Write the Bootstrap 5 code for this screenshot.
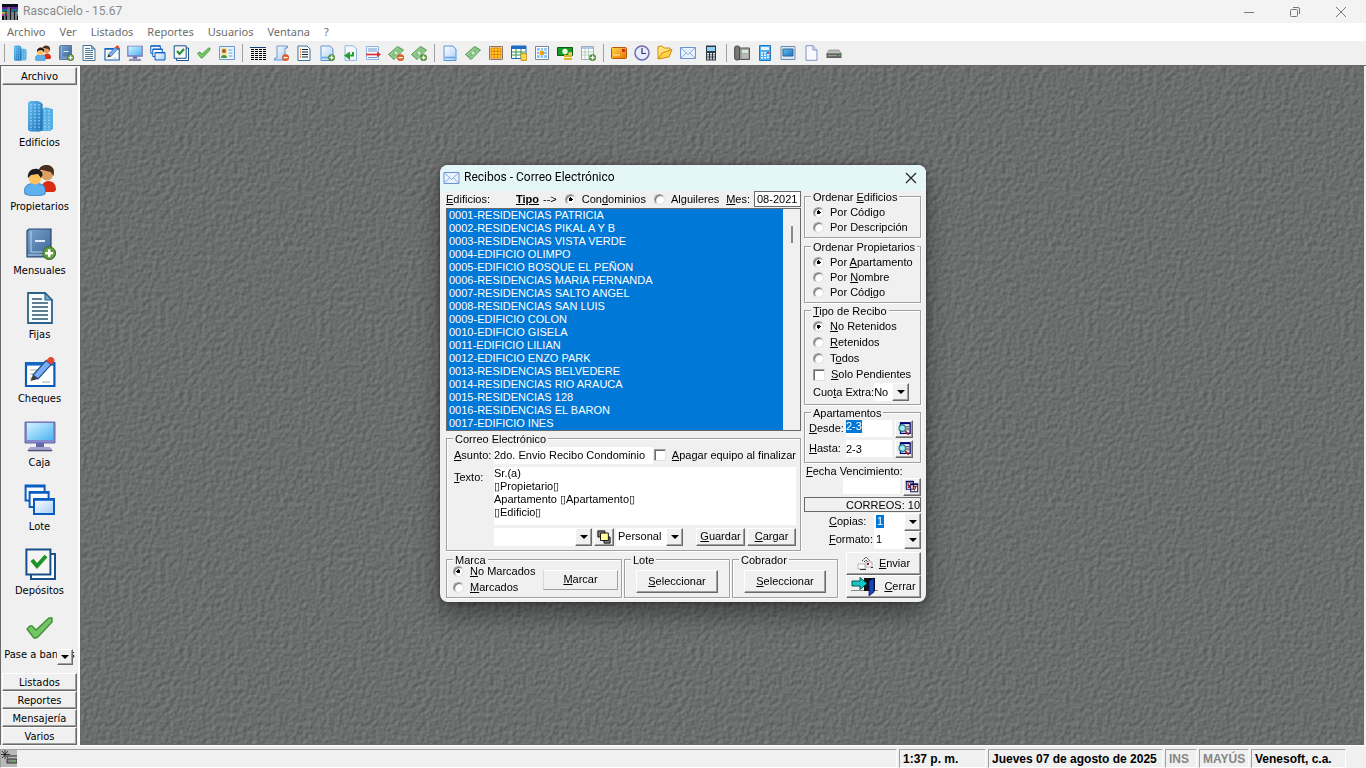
<!DOCTYPE html>
<html lang="es">
<head>
<meta charset="utf-8">
<meta name="viewport" content="width=device-width, initial-scale=1">
<title>RascaCielo - 15.67</title>
<link href="https://cdn.jsdelivr.net/npm/bootstrap@5.3.0/dist/css/bootstrap.min.css" rel="stylesheet">
<style>
:root{--face:#f0f0f0;--edge:#a0a0a0;--dark:#696969;--sel:#0078d7}
body{font-family:"Liberation Sans",Arial,sans-serif;font-size:11px;line-height:13px;color:#000;background:var(--face)}
u{text-underline-offset:1px}
.app-title{height:23px;background:#f3f3f3;color:#8a8a8a;font:12px/23px Roboto,sans-serif;padding:0 2px;gap:5px}
.win-btn{width:46px;height:20px;border:0;padding:0;background:none}
.win-btn svg{display:block;margin:auto}
.app-menu{height:18px;background:#fff;font:11px/18px "Noto Sans",sans-serif}
.app-menu a{color:#6d6d6d;padding:0 7px;text-decoration:none}
.toolbar{height:25px;border-bottom:1px solid var(--dark)}
.tool{width:23px;height:22px;padding:0;border:0;background:none}
.tool svg{width:16px;height:16px;display:block;margin:auto}
.tsep{width:8px;height:18px;background:linear-gradient(var(--edge),var(--edge)) center/1px 100% no-repeat}
.side{width:80px;border-left:1px solid var(--dark);border-right:2px solid #fff;font:11px/14px "DejaVu Sans Condensed","DejaVu Sans",sans-serif;padding:1px 1px 0 1px}
.side-tab{height:18px;border:1px solid;border-color:#fff var(--dark) var(--dark) #fff;background:var(--face);padding:0;line-height:15px;box-shadow:inset -1px -1px 0 var(--edge);color:#000}
.side-list{padding-top:7px;min-height:0}
.side-item{height:64px;border:0;background:none;padding:8px 0 0;white-space:nowrap;color:#000}
.side-item svg{width:32px;height:32px}
.side-item span{margin-top:4px}
.more{right:4px;bottom:8px;width:16px;height:16px}
.desk{background-color:#6b6e6c;border:1px solid var(--dark);border-top:0;margin-right:2px;background-image:url("data:image/svg+xml,%3Csvg xmlns='http://www.w3.org/2000/svg' width='256' height='256'%3E%3Cfilter id='f' x='0' y='0' width='100%25' height='100%25' color-interpolation-filters='sRGB'%3E%3CfeTurbulence type='fractalNoise' baseFrequency='.22' numOctaves='2' seed='4' stitchTiles='stitch'/%3E%3CfeDiffuseLighting surfaceScale='.5' lighting-color='%23959997'%3E%3CfeDistantLight azimuth='225' elevation='46'/%3E%3C/feDiffuseLighting%3E%3C/filter%3E%3Crect width='256' height='256' filter='url(%23f)'/%3E%3C/svg%3E")}
.status{height:23px;padding:3px 20px 0 0;gap:2px;font-size:12px;font-weight:700;border-top:1px solid #fff}
.pane{height:19px;border:1px solid;border-color:var(--edge) #fff #fff var(--edge);padding:0 3px;line-height:18px;white-space:nowrap}
.pane.off{color:#858585}
.tray{width:16px;height:17px}

.layer{pointer-events:none;padding-bottom:2px}
.dlg{width:486px;border-radius:8px;background:var(--face);pointer-events:auto;box-shadow:0 12px 24px rgba(0,0,0,.4),0 0 4px rgba(0,0,0,.45)}
.dlg-title{height:26px;background:#e5f6f8;font:12px/25px Roboto,sans-serif;border-radius:8px 8px 0 0;padding:0 3px}
.dlg-body{padding:0 5px 4px 6px}
.main-col{width:355px}
.side-col{width:117px}
fieldset.box{border:1px solid var(--edge);box-shadow:1px 1px 0 #fff,inset 1px 1px 0 #fff}
fieldset.box>legend{float:none;width:auto;margin:0 0 0 6px;padding:0 2px;font-size:11px;line-height:12px;background:var(--face)}
.stack{padding:2px 0 2px 8px}
.opt{height:15px;gap:6px;white-space:nowrap}
.opt.tall{height:16px}
.opt input{appearance:none;flex:none;margin:0;width:12px;height:12px;background:#fff;border:1px solid;border-color:var(--edge) #e3e3e3 #e3e3e3 var(--edge);box-shadow:inset 1px 1px 0 var(--dark)}
.opt input[type=radio]{border-radius:50%;width:11px;height:11px;box-shadow:inset 1px 1px 1px var(--dark)}
.opt input[type=radio]:checked{background:radial-gradient(circle,#000 0 2px,#fff 2px)}
.field{border:0;background:#fff;padding:0 2px;color:#000;min-width:0;font:inherit;border-radius:0;resize:none;outline:0}
.b3d{border:1px solid;border-color:#fff var(--dark) var(--dark) #fff;box-shadow:inset -1px -1px 0 var(--edge);background:var(--face);padding:0;color:#000;display:flex;align-items:center;justify-content:center}
.flat{border:1px solid var(--edge);border-top-color:#fff;border-left-color:#d8d8d8;background:var(--face);padding:0;color:#000}
.combo{background:#fff;height:18px}
.combo select{appearance:none;border:0;background:none;padding:0 2px;width:100%;height:100%;font:inherit;color:#000;outline:0;border-radius:0}
.combo select.picked{width:8px;height:13px;margin:2px;padding:0 1px;background:var(--sel);color:#fff;display:block}
.combo i{right:0;top:0;width:17px;height:100%;pointer-events:none}
.arr::after{content:"";border:4px solid transparent;border-top-color:#000;border-bottom:0}
.buildings{height:223px;border:1px solid var(--dark)}
.buildings select{border:0;padding:0;margin:0;background:#fff;outline:0;overflow:hidden;font:inherit;scrollbar-width:none;border-radius:0}
.buildings option{height:13px;min-height:13px;padding:0 2px;line-height:13px;background:var(--sel) linear-gradient(var(--sel),var(--sel));color:#fff;-webkit-text-fill-color:#fff}
.rail{width:17px;padding:17px 8px}
.rail div{width:2px;height:17px;background:#8a8a8a}
.hi{background:var(--sel);color:#fff;padding:0;display:block}
.lbl{width:37px}
.w-mes{width:47px;height:16px;border:1px solid var(--dark)}
.counter{height:15px;margin-top:1px;margin-bottom:1px;border:1px solid var(--dark);line-height:14px}
.sq{width:18px;height:18px}
.cmd{width:75px;height:23px;gap:6px}
.cmd svg{height:20px}
</style>
</head>
<body class="vh-100 overflow-hidden d-flex flex-column">
<svg class="position-absolute" width="0" height="0" aria-hidden="true">
<defs>
<linearGradient id="gb" x2="1" y2="1"><stop stop-color="#68bdf0"/><stop offset="1" stop-color="#1972ba"/></linearGradient>
<linearGradient id="gk" x2="1" y2="1"><stop stop-color="#7ba4cf"/><stop offset="1" stop-color="#3c6396"/></linearGradient>
<linearGradient id="gp" x2="1" y2="1"><stop stop-color="#fff"/><stop offset="1" stop-color="#a9cdf5"/></linearGradient>
<linearGradient id="gm" x2="1" y2="1"><stop stop-color="#d4f4ff"/><stop offset="1" stop-color="#4cb4f2"/></linearGradient>
<linearGradient id="gy" x2="1" y2="1"><stop stop-color="#ffd84a"/><stop offset="1" stop-color="#e67300"/></linearGradient>
</defs>
<symbol id="plus" viewBox="0 0 16 16"><circle cx="12.6" cy="12.6" r="3.2" fill="#5c9a3c" stroke="#38701f" stroke-width=".5"/><path d="M12.6 10.6v4M10.6 12.6h4" stroke="#fff" stroke-width="1.3"/></symbol>
<symbol id="minus" viewBox="0 0 16 16"><circle cx="12.6" cy="12.6" r="3.2" fill="#e6602a" stroke="#b53d0c" stroke-width=".5"/><path d="M10.6 12.6h4" stroke="#fff" stroke-width="1.3"/></symbol>
<symbol id="edif" viewBox="0 0 16 16"><path d="M2 1.500 3 .5h4l2 1V15l-1 .7H3L2 15z" fill="url(#gb)"/><path d="M9 4.500 11 3.600l3.500 1V14.500l-1.500 1H9z" fill="#56b0e6"/><path d="M3.500 2v13M5.500 2v13M7.500 2v13M10.500 5v10M12.500 5v10" stroke="#b5e4ff" stroke-width=".6" stroke-dasharray=".7 .9"/><path d="M9 2v13.500" stroke="#2473b0" stroke-width=".6"/></symbol>
<symbol id="prop" viewBox="0 0 16 16"><path d="M9 14c-.5-3 0-5 3-5.500 3 .1 4 2 4 4.500l-1 1z" fill="#dc2a13"/><circle cx="11.500" cy="5" r="3.200" fill="#dda063"/><path d="M7.500 3C8-.2 14.500-.6 15 3.500L14.800 6l-1.500-2-4-1z" fill="#4a2f20"/><path d="M.5 15c-.8-3 .5-5.200 4-5.200h2.500c3 .2 4.300 2 3.500 5.200-2 1.200-7.500 1.200-10 0z" fill="#5db1ef" stroke="#2674b8" stroke-width=".4"/><circle cx="5.500" cy="7.200" r="3.100" fill="#ffc25f"/><path d="M2 7C1.200 1.500 9 .8 9.300 5.500L8.500 7 7 5 3.500 5.500z" fill="#1b1b22"/></symbol>
<symbol id="mens" viewBox="0 0 16 16"><path d="M1.500 1.500 2.500.5h11v14h-12z" fill="url(#gk)" stroke="#28476f" stroke-width=".6"/><path d="M3.500 1.500v10.500h10M2 13.500h10" fill="none" stroke="#b8d3ec" stroke-width=".5"/><path d="M5.500 6.500h5" stroke="#dcecff" stroke-width="1"/><use href="#plus"/></symbol>
<symbol id="fija" viewBox="0 0 16 16"><path d="M2 .5h8.500l3.500 3.500v11.500H2z" fill="#f8fcff" stroke="#2c638d" stroke-width=".9"/><path d="M10.500.5V4H14z" fill="#78adc9" stroke="#2c638d" stroke-width=".6"/><path d="M4 3.500h5M4 5.500h8M4 7.500h8M4 9.500h8M4 11.500h8M4 13.500h8" stroke="#2f536d" stroke-width=".8"/></symbol>
<symbol id="cheq" viewBox="0 0 16 16"><path d="M1 3.500h14.200V15H1z" fill="#fff" stroke="#0b5bb8" stroke-width="1.100"/><path d="M1 3h14v1.800H1z" fill="#1467c5"/><path d="M3 7h5M3 9h4M3 11h3M9 13h4" stroke="#aaa" stroke-width=".6"/><path d="M4.500 9.500 11 2.300l2.500 2L7 11.500z" fill="#78aef4" stroke="#244f8c" stroke-width=".6"/><path d="m4.500 9.500 2.500 2L3.200 12.500z" fill="#3d3a35"/><path d="m11 2.300 1.700-1.700c1.600-.4 3 .9 2.400 2.300L13.500 4.300z" fill="#e3482d"/></symbol>
<symbol id="caja" viewBox="0 0 16 16"><path d="M.5 1h15v10.500H.5z" fill="#8589c9" stroke="#6669ac" stroke-width=".5"/><path d="M1.500 1.500h13V10h-13z" fill="url(#gm)"/><path d="M6 11.500h4V14H6z" fill="#6367a0"/><path d="M3 13.500h10l1.500 2h-13z" fill="#a6a5d1"/><path d="M2 15.300h12" stroke="#504f78" stroke-width=".7"/></symbol>
<symbol id="lote" viewBox="0 0 16 16"><g fill="#f7fbff" stroke="#0a5cc0" stroke-width="1"><path d="M.8.8h9.500v7.500H.8z"/><path d="M2.800 4h9.500v7.500H2.800z"/><path d="M5 7.500h10V15H5z" fill="url(#gp)"/></g><path d="M.8 1.200h9.500M2.800 4.400h9.500M5 7.900h10" stroke="#0a5cc0" stroke-width="1"/></symbol>
<symbol id="depo" viewBox="0 0 16 16"><path d="M3.500 3h12v12.500h-12z" fill="#fff" stroke="#17508a"/><path d="M1.200.8h12v12.500h-12z" fill="#f5f5f5" stroke="#17508a"/><path d="m4 6 2.500 3L11 4" fill="none" stroke="#1e9327" stroke-width="2"/></symbol>
<symbol id="chk" viewBox="0 0 16 16"><path d="m1.500 8.500 1.500-1.500h1L6 9l6.500-6h1.500v2L7 12.500l-1 .5H5z" fill="#74c566" stroke="#438f3c" stroke-width=".7"/></symbol>
<symbol id="card" viewBox="0 0 16 16"><path d="M.5 1.500h15v13H.5z" fill="#eaf4ff" stroke="#6798cb"/><path d="M2 3h6v10H2z" fill="#f4dfa5"/><circle cx="5" cy="6" r="2" fill="#a35c15"/><path d="M2 13c.3-4 5.700-4 6 0z" fill="#419440"/><path d="M9.500 5h4M9.500 8h4M9.500 11h4" stroke="#6f9dcc"/></symbol>
<symbol id="grid" viewBox="0 0 16 16"><path d="M0 2.500h16" stroke="#1a3a7a"/><path d="M1 4.500h3M5 4.500h3M9 4.500h3M13 4.500h3M1 6.500h3M5 6.500h3M9 6.500h3M13 6.500h3M1 8.500h3M5 8.500h3M9 8.500h3M13 8.500h3M1 10.500h3M5 10.500h3M9 10.500h3M13 10.500h3M1 12.500h3M5 12.500h3M9 12.500h3M13 12.500h3M1 14.500h3M5 14.500h3M9 14.500h3M13 14.500h3" stroke="#000"/></symbol>
<symbol id="scroll" viewBox="0 0 16 16"><path d="M4 1h10.500v2H12v10l-1.500 2H1l1-2h2z" fill="url(#gp)" stroke="#5a8dc9" stroke-width=".9"/><use href="#minus"/></symbol>
<symbol id="list" viewBox="0 0 16 16"><path d="M2 1h9l3 3v11.500H2z" fill="#f8fcff" stroke="#2c638d" stroke-width=".9"/><path d="M4 4.500h1M4 7h1M4 9.500h1M4 12h1" stroke="#e36e15" stroke-width="1.300"/><path d="M6 4.500h6M6 7h6M6 9.500h6M6 12h6" stroke="#123" stroke-width="1"/></symbol>
<symbol id="page" viewBox="0 0 16 16"><path d="M2 1h9l3 3v11.500H2z" fill="url(#gp)" stroke="#4d8bd4" stroke-width=".9"/><path d="M3 12.500h10" stroke="#67a4e5" stroke-width="1.600"/></symbol>
<symbol id="padd" viewBox="0 0 16 16"><use href="#page"/><use href="#plus"/></symbol>
<symbol id="parr" viewBox="0 0 16 16"><path d="M3 .8h8l3.500 3v11.500H3z" fill="#f3f9ff" stroke="#7aa3d4" stroke-width=".8"/><path d="M12 7v4.500H8V15l-6-4.500 6-4v3h2V7z" fill="#27a12d"/></symbol>
<symbol id="move" viewBox="0 0 16 16"><path d="M1.500 1.500h12v13h-12z" fill="#f4f8ff" stroke="#8fb4df"/><path d="M3 4h9M3 6h9M3 12.500h9" stroke="#6c98cf"/><path d="M1 9.500h12" stroke="#e22e36" stroke-width="1.700"/><path d="m12 6.500 4 3-4 3z" fill="#e22e36"/></symbol>
<symbol id="cash" viewBox="0 0 16 16"><path d="m.5 9.500 9-8L15.500 5 6 14.500z" fill="#88c582" stroke="#4c8e4e" stroke-width=".9"/><circle cx="8" cy="8" r="2.200" fill="#d1edc8" stroke="#519355" stroke-width=".7"/><path d="m2.500 9.500 7-6M6.500 12.500l7-6.500" stroke="#c1e5ba" stroke-width=".6"/></symbol>
<symbol id="cmin" viewBox="0 0 16 16"><use href="#cash"/><use href="#minus"/></symbol>
<symbol id="cadd" viewBox="0 0 16 16"><use href="#cash"/><use href="#plus"/></symbol>
<symbol id="og" viewBox="0 0 16 16"><path d="M1.500 1.500h13v13h-13z" fill="#f9ecd0" stroke="#8a7668"/><path d="M3 3h10v10H3z" fill="#ffcf23"/><path d="M3 6.200h10M3 9.600h10M6.200 3v10M9.600 3v10M3 3h10v10H3z" fill="none" stroke="#e67c0a"/></symbol>
<symbol id="tab" viewBox="0 0 16 16"><path d="M.5 1h14.500v12.500H.5z" fill="#fff" stroke="#1b62b0"/><path d="M.5 1H15v3H.5z" fill="#1e6fc4"/><path d="M1 7h13M1 10h13M5 4v9M10 4v9" stroke="#35924d"/><path d="M10 8.500h5.500v7H10z" fill="#f6cb31" stroke="#b88709" stroke-width=".7"/><path d="M10 10.800h5.500M10 13h5.500" stroke="#fff2a0" stroke-width=".6"/></symbol>
<symbol id="bg" viewBox="0 0 16 16"><path d="M1.500 1.500h13v13h-13z" fill="#fff" stroke="#75869a"/><path d="M3 3h10v10H3z" fill="#8fc0f2"/><path d="M3 6.200h10M3 9.600h10M6.200 3v10M9.600 3v10" stroke="#fff" stroke-width="1"/><path d="M6 6h4v4H6z" fill="#f0a30f"/></symbol>
<symbol id="money" viewBox="0 0 16 16"><path d="M.5 2.500h15v8H.5z" fill="#159b25" stroke="#0a5c12"/><circle cx="8" cy="6.500" r="2.700" fill="#eaffdc"/><path d="M7 10h4.500V7H15v8H7z" fill="#d6b335"/><path d="M7 12.500h8M11.500 9H15" stroke="#fff0a0"/></symbol>
<symbol id="cal" viewBox="0 0 16 16"><path d="M1.500 1.500h12v13h-12z" fill="#fff" stroke="#9daec0"/><path d="M2 2h11v2H2z" fill="#b1cae5"/><path d="M2 7h11M2 10h11M5 4v10M8.500 4v10" stroke="#a5c3b0" stroke-width=".8"/><use href="#plus"/></symbol>
<symbol id="omail" viewBox="0 0 16 16"><rect x=".5" y="2.500" width="15" height="11" rx="1" fill="url(#gy)" stroke="#b25a08"/><path d="M2 10h7" stroke="#fff2b0"/><path d="M11 4h3v3h-3z" fill="#d72e17"/></symbol>
<symbol id="clock" viewBox="0 0 16 16"><circle cx="8" cy="8" r="7" fill="#e9eaff" stroke="#6a6eb0" stroke-width="1.500"/><path d="M8 3v5.500h4" fill="none" stroke="#333763" stroke-width="1.200"/></symbol>
<symbol id="fold" viewBox="0 0 16 16"><path d="M1 14V1.500l4-.5 2 2h6v3" fill="#ffe27a" stroke="#cf8b0c"/><path d="m1 14 4-6 10-3.500L12 12z" fill="#ffd24a" stroke="#cf8b0c"/></symbol>
<symbol id="mail" viewBox="0 0 16 16"><path d="M.5 2.500h15v11H.5z" fill="#e9f2ff" stroke="#6c94cf"/><path d="M1 3l7 6.500L15 3M1 13l5-5M15 13l-5-5" fill="none" stroke="#7a9fd6" stroke-width=".9"/></symbol>
<symbol id="cell" viewBox="0 0 16 16"><path d="M3 .5h10v15H3z" fill="#2d3a45"/><path d="M4 2h8v4H4z" fill="#8fd2f5"/><path d="M5 8v7M8 8v7M11 8v7" stroke="#fff" stroke-width="1.800" stroke-dasharray="1.400 .8"/></symbol>
<symbol id="phone" viewBox="0 0 16 16"><path d="M5 3h10.500v11.500H5z" fill="#a6a6a6" stroke="#555"/><path d="M8 5h6v3H8z" fill="#d4ebd8"/><path d="M9 9.500v4M11 9.500v4M13 9.500v4" stroke="#eee" stroke-dasharray="1 1"/><rect x=".7" y="1" width="5" height="14" rx="2" fill="#777" stroke="#444"/></symbol>
<symbol id="calc" viewBox="0 0 16 16"><path d="M2.500.5h11v15h-11z" fill="#4eb0f2" stroke="#2277bd"/><path d="M4 2h8v3H4z" fill="#e0f5ff"/><path d="M5 7v7M8 7v7M11 9v5" stroke="#fff" stroke-width="1.800" stroke-dasharray="1.500 1"/><path d="M10 7h2v1.500h-2z" fill="#e22"/></symbol>
<symbol id="scr" viewBox="0 0 16 16"><path d="M1 1.500h14v13H1z" fill="#dbe7f3" stroke="#708db1"/><path d="M3 4h10v7H3z" fill="url(#gb)" stroke="#31659c"/></symbol>
<symbol id="blank" viewBox="0 0 16 16"><path d="M3 .7h7L14 5v10.300H3z" fill="#f7f9ff" stroke="#8292c1"/><path d="M10 .7V5h4" fill="#d9e0f2" stroke="#8292c1"/></symbol>
<symbol id="scan" viewBox="0 0 16 16"><path d="M3 5h10l2.500 4H.5z" fill="#b9bcb9" stroke="#757575" stroke-width=".6"/><path d="M.5 8.500h15v4.500H.5z" fill="#5d605d"/><path d="M2 10.700h9" stroke="#aaa"/><path d="M12.500 10.700h2" stroke="#4ee04a"/></symbol>
<symbol id="find" viewBox="0 0 16 16"><path d="M4 1h11v12H4z" fill="#fff" stroke="#000070" stroke-width="1.500"/><path d="M4 1.500h11" stroke="#000070" stroke-width="2"/><path d="M10 5h4M10 7h4M10 9h4" stroke="#334"/><circle cx="6" cy="7" r="3.700" fill="#9ee8ee" stroke="#167980" stroke-width="1.200"/><path d="m9 10 4.500 4.500" stroke="#a42323" stroke-width="2"/></symbol>
<symbol id="dates" viewBox="0 0 16 16"><path d="M1.500 1.500h8v9h-8zM6.500 4.500h8v9h-8z" fill="#fff" stroke="#10105e" stroke-width="1.200"/><path d="M1 2h9M6 5h9" stroke="#10105e" stroke-width="1.800"/><path d="M5 4.500H3.500v2H5v2H3M9 7.500h3.500L10.500 12" fill="none" stroke="#a01515" stroke-width="1.300"/></symbol>
<symbol id="layers" viewBox="0 0 16 16"><path d="M1 1h8v7H1zM8 8h7v7H8z" fill="#808080" stroke="#000"/><path d="M4 3.500h9v8.500H4z" fill="#ffff9c" stroke="#000"/></symbol>
</svg>

<header class="app-title d-flex align-items-center flex-shrink-0">
  <svg width="16" height="16" viewBox="0 0 16 16"><path d="M0 0h16v16H0z" fill="#10101c"/><path d="M0 3h16v2H0z" fill="#6d1fa0"/><path d="M0 5h16v3H0z" fill="#136f88"/><path d="M0 8h6v2H0zm11 0h5v2h-5z" fill="#c6b72c"/><path d="M0 10h5v2H0zm12 0h4v2h-4z" fill="#c22c94"/><path d="M2 9h2v7H2zM6 3h1l1 3v10H5V6zM9 8h3v8H9zM13 8h2v8h-2z" fill="#77808a"/><path d="M4 7v9M8.500 4v12M12.500 7v9" stroke="#15151b"/></svg>
  <span>RascaCielo - 15.67</span>
  <div class="ms-auto d-flex">
    <button class="win-btn" aria-label="Minimizar"><svg width="10" height="10"><path d="M0 5.500h10" stroke="#777"/></svg></button>
    <button class="win-btn" aria-label="Restaurar"><svg width="10" height="10" fill="none" stroke="#777"><rect x=".5" y="2.500" width="7" height="7" rx="1"/><path d="M3 .5h5q1.500 0 1.500 1.500v5"/></svg></button>
    <button class="win-btn" aria-label="Cerrar"><svg width="10" height="10"><path d="m0 0 10 10M10 0 0 10" stroke="#777"/></svg></button>
  </div>
</header>
<nav class="app-menu d-flex flex-shrink-0"><a href="#">Archivo</a><a href="#">Ver</a><a href="#">Listados</a><a href="#">Reportes</a><a href="#">Usuarios</a><a href="#">Ventana</a><a href="#">?</a></nav>
<div class="toolbar d-flex align-items-center flex-shrink-0" id="toolbar" role="toolbar"></div>

<div class="d-flex flex-grow-1" style="min-height:0">
  <aside class="side d-flex flex-column flex-shrink-0">
    <button class="side-tab w-100 flex-shrink-0">Archivo</button>
    <div class="side-list position-relative d-flex flex-column flex-grow-1 overflow-hidden" id="items">
      <button class="more b3d arr position-absolute" aria-label="Bajar"></button>
    </div>
    <button class="side-tab w-100 flex-shrink-0">Listados</button>
    <button class="side-tab w-100 flex-shrink-0">Reportes</button>
    <button class="side-tab w-100 flex-shrink-0">Mensajería</button>
    <button class="side-tab w-100 flex-shrink-0">Varios</button>
  </aside>
  <main class="desk flex-grow-1"></main>
</div>

<footer class="status d-flex flex-shrink-0">
  <div class="pane flex-grow-1 p-0"><svg class="tray d-block" viewBox="0 0 16 17"><path d="M0 0h16v17H0z" fill="#b8b8b8"/><path d="M6 6h10M6 9h10v4H6z" stroke="#333" fill="#888"/><path d="M12 11h3" stroke="#3d3"/><path d="M4 0v9M0 4.500h9M1 1l6 7M7 1 1 8" stroke="#111" stroke-width=".8"/></svg></div>
  <div class="pane" style="width:87px">1:37 p. m.</div>
  <div class="pane" style="width:175px">Jueves 07 de agosto de 2025</div>
  <div class="pane off" style="width:32px">INS</div>
  <div class="pane off" style="width:50px">MAYÚS</div>
  <div class="pane" style="width:95px">Venesoft, c.a.</div>
</footer>

<div class="layer position-fixed top-0 start-0 w-100 h-100 d-flex align-items-center justify-content-center">
<form class="dlg" role="dialog" aria-labelledby="dt">
  <div class="dlg-title d-flex align-items-center">
    <svg width="17" height="16" class="me-1"><use href="#mail"/></svg><span id="dt">Recibos - Correo Electrónico</span>
    <button type="button" class="border-0 bg-transparent p-0 ms-auto me-1 d-flex" aria-label="Cerrar"><svg width="16" height="12"><path d="m3 1 10 10M13 1 3 11" stroke="#222" stroke-width="1.200"/></svg></button>
  </div>
  <div class="dlg-body">
    <div class="d-flex justify-content-between">
      <div class="main-col">
        <div class="d-flex align-items-center" style="height:17px">
          <label for="blds" style="width:70px"><u>E</u>dificios:</label>
          <b class="me-1"><u>Tipo</u></b><span class="me-2">--&gt;</span>
          <label class="opt d-flex align-items-center me-2"><input type="radio" name="tipo" checked><span>Con<u>d</u>ominios</span></label>
          <label class="opt d-flex align-items-center"><input type="radio" name="tipo"><span>Al<u>g</u>uileres</span></label>
          <label for="mes" class="ms-auto me-1"><u>M</u>es:</label><input id="mes" class="field w-mes" value="08-2021">
        </div>
        <div class="buildings d-flex">
          <select id="blds" multiple size="17" class="flex-grow-1">
            <option selected>0001-RESIDENCIAS PATRICIA</option><option selected>0002-RESIDENCIAS PIKAL A Y B</option><option selected>0003-RESIDENCIAS VISTA VERDE</option><option selected>0004-EDIFICIO OLIMPO</option><option selected>0005-EDIFICIO BOSQUE EL PEÑON</option><option selected>0006-RESIDENCIAS MARIA FERNANDA</option><option selected>0007-RESIDENCIAS SALTO ANGEL</option><option selected>0008-RESIDENCIAS SAN LUIS</option><option selected>0009-EDIFICIO COLON</option><option selected>0010-EDIFICIO GISELA</option><option selected>0011-EDIFICIO LILIAN</option><option selected>0012-EDIFICIO ENZO PARK</option><option selected>0013-RESIDENCIAS BELVEDERE</option><option selected>0014-RESIDENCIAS RIO ARAUCA</option><option selected>0015-RESIDENCIAS 128</option><option selected>0016-RESIDENCIAS EL BARON</option><option selected>0017-EDIFICIO INES</option>
          </select>
          <div class="rail"><div></div></div>
        </div>
        <fieldset class="box" style="margin-top:2px"><legend>Correo Electrónico</legend>
          <div class="d-flex flex-column" style="padding:2px 4px 4px 7px;gap:3px">
            <div class="d-flex align-items-center">
              <label for="asu" style="width:40px"><u>A</u>sunto:</label><input id="asu" class="field" style="width:159px;height:17px;padding-left:0" value="2do. Envio Recibo Condominio">
              <label class="opt d-flex align-items-center ms-auto"><input type="checkbox"><span><u>A</u>pagar equipo al finalizar</span></label>
            </div>
            <div class="d-flex">
              <label for="txt" class="pt-1" style="width:40px"><u>T</u>exto:</label><textarea id="txt" class="field flex-grow-1 overflow-hidden" style="height:58px;padding-left:0">Sr.(a)
▯Propietario▯
Apartamento ▯Apartamento▯
▯Edificio▯</textarea>
            </div>
            <div class="d-flex" style="padding-left:40px">
              <div class="combo position-relative" style="width:98px"><select aria-label="Plantilla"><option></option></select><i class="b3d arr position-absolute"></i></div>
              <button type="button" class="b3d" style="width:20px;margin:0 2px" aria-label="Campos"><svg width="14" height="14"><use href="#layers"/></svg></button>
              <div class="combo position-relative" style="width:67px"><select aria-label="Tipo de correo"><option>Personal</option></select><i class="b3d arr position-absolute"></i></div>
              <button type="button" class="b3d ms-auto" style="width:49px"><span><u>G</u>uardar</span></button>
              <button type="button" class="b3d" style="width:49px;margin-left:2px"><span><u>C</u>argar</span></button>
            </div>
          </div>
        </fieldset>
      </div>

      <div class="side-col">
        <fieldset class="box" style="margin-bottom:3px"><legend>Ordenar <u>E</u>dificios</legend><div class="stack">
          <label class="opt d-flex align-items-center"><input type="radio" name="oe" checked><span>Por Código</span></label>
          <label class="opt d-flex align-items-center"><input type="radio" name="oe"><span>Por Descripción</span></label></div></fieldset>
        <fieldset class="box" style="margin-bottom:2px"><legend>Ordenar Propietarios</legend><div class="stack">
          <label class="opt d-flex align-items-center"><input type="radio" name="op" checked><span>Por <u>A</u>partamento</span></label>
          <label class="opt d-flex align-items-center"><input type="radio" name="op"><span>Por <u>N</u>ombre</span></label>
          <label class="opt d-flex align-items-center"><input type="radio" name="op"><span>Por Cód<u>i</u>go</span></label></div></fieldset>
        <fieldset class="box" style="margin-bottom:2px"><legend><u>T</u>ipo de Recibo</legend><div class="stack">
          <label class="opt tall d-flex align-items-center"><input type="radio" name="tr" checked><span><u>N</u>o Retenidos</span></label>
          <label class="opt tall d-flex align-items-center"><input type="radio" name="tr"><span><u>R</u>etenidos</span></label>
          <label class="opt tall d-flex align-items-center"><input type="radio" name="tr"><span>T<u>o</u>dos</span></label>
          <label class="opt tall d-flex align-items-center"><input type="checkbox"><span><u>S</u>olo Pendientes</span></label>
          <div class="d-flex align-items-center" style="height:19px"><label for="ce" class="text-nowrap">Cuo<u>t</u>a Extra:</label><div class="combo position-relative ms-auto" style="width:36px;margin-right:11px"><select id="ce" class="p-0"><option>No</option></select><i class="b3d arr position-absolute"></i></div></div></div></fieldset>
        <fieldset class="box"><legend>Apartamentos</legend><div style="padding:0 7px 3px 4px">
          <div class="d-flex align-items-center" style="height:20px;gap:3px"><label for="de" class="text-nowrap" style="width:34px"><u>D</u>esde:</label><div class="field flex-grow-1 p-0" style="height:17px"><input id="de" class="field hi" size="1" style="width:16px" value="2-3"></div><button type="button" class="b3d sq" aria-label="Buscar desde"><svg width="14" height="14"><use href="#find"/></svg></button></div>
          <div class="d-flex align-items-center" style="height:20px;gap:3px"><label for="ha" class="text-nowrap" style="width:34px"><u>H</u>asta:</label><input id="ha" class="field flex-grow-1 p-0" size="1" style="height:17px" value="2-3"><button type="button" class="b3d sq" aria-label="Buscar hasta"><svg width="14" height="14"><use href="#find"/></svg></button></div></div></fieldset>
        <label for="fv" class="d-block text-nowrap" style="height:15px;padding:2px 0 0 2px"><u>F</u>echa Vencimiento:</label>
        <div class="d-flex justify-content-end" style="height:18px;gap:3px"><input id="fv" class="field" style="width:57px;height:16px"><button type="button" class="b3d sq" aria-label="Calendario"><svg width="14" height="14"><use href="#dates"/></svg></button></div>
        <div class="counter text-end">CORREOS: 10</div>
        <div class="d-flex align-items-center justify-content-end" style="height:18px"><label for="co" style="width:45px"><u>C</u>opias:</label><div class="combo position-relative" style="width:47px"><select id="co" class="picked"><option>1</option></select><i class="b3d arr position-absolute"></i></div></div>
        <div class="d-flex align-items-center justify-content-end" style="height:18px"><label for="fo" style="width:45px"><u>F</u>ormato:</label><div class="combo position-relative" style="width:47px"><select id="fo"><option>1</option></select><i class="b3d arr position-absolute"></i></div></div>
      </div>
    </div>

    <div class="d-flex align-items-end" style="gap:2px;padding-top:1px">
      <fieldset class="box" style="width:176px;height:44px"><legend>Marca</legend><div class="d-flex align-items-center" style="padding:0 3px 0 6px;margin-top:-2px">
        <div><label class="opt tall d-flex align-items-center"><input type="radio" name="mk" checked><span><u>N</u>o Marcados</span></label><label class="opt tall d-flex align-items-center"><input type="radio" name="mk"><span><u>M</u>arcados</span></label></div>
        <button type="button" class="flat ms-auto" style="width:75px;height:20px"><u>M</u>arcar</button></div></fieldset>
      <fieldset class="box" style="width:106px;height:44px"><legend>Lote</legend><button type="button" class="b3d mx-auto mt-1" style="width:82px;height:23px"><span><u>S</u>eleccionar</span></button></fieldset>
      <fieldset class="box" style="width:106px;height:44px"><legend>Cobrador</legend><button type="button" class="b3d mx-auto mt-1" style="width:82px;height:23px"><span><u>S</u>eleccionar</span></button></fieldset>
      <div class="ms-auto">
        <button type="button" class="b3d cmd"><svg width="16" viewBox="0 0 16 16"><path d="M1 9h7v5H1zM9 7h6v5H9z" fill="#fff" stroke="#999" stroke-width=".7"/><path d="m5 6 4-4 4 4M7 7l2-2 2 2" fill="none" stroke="#333" stroke-dasharray="2 1"/><path d="M10 8h2v2h-2z" fill="#b01030"/><path d="M3 14.500h6M14 12.500h2" stroke="#333"/></svg><span><u>E</u>nviar</span></button>
        <button type="button" class="b3d cmd"><svg width="27" viewBox="0 0 27 20"><path d="M0 14.500h27" stroke="#888"/><path d="M13 2h11v13H13z" fill="#111"/><path d="M18 5 23 2v14l-5 4z" fill="#1746b5" stroke="#000060" stroke-width=".7"/><path d="M1 5h8V1.500l7 6-7 6V10H1z" fill="#18c5c5" stroke="#075757"/></svg><span><u>C</u>errar</span></button>
      </div>
    </div>
  </div>
</form>
</div>

<script src="https://cdn.jsdelivr.net/npm/bootstrap@5.3.0/dist/js/bootstrap.bundle.min.js"></script>
<script>
const groups = ["edif prop mens fija cheq caja lote depo chk card","grid scroll list padd parr move cmin cadd","page cash og tab bg money cal","omail clock fold mail cell","phone calc scr blank scan"];
document.getElementById("toolbar").innerHTML = groups.map(g => '<span class="tsep"></span>' + g.split(" ").map(n => `<button class="tool" aria-label="${n}"><svg><use href="#${n}"/></svg></button>`).join("")).join("");
const items = [["edif","Edificios"],["prop","Propietarios"],["mens","Mensuales"],["fija","Fijas"],["cheq","Cheques"],["caja","Caja"],["lote","Lote"],["depo","Depósitos"],["chk","Pase a bancos"]];
document.getElementById("items").insertAdjacentHTML("afterbegin", items.map(([n,t]) => `<button class="side-item d-flex flex-column align-items-center flex-shrink-0"><svg><use href="#${n}"/></svg><span>${t}</span></button>`).join(""));
</script>
</body>
</html>
